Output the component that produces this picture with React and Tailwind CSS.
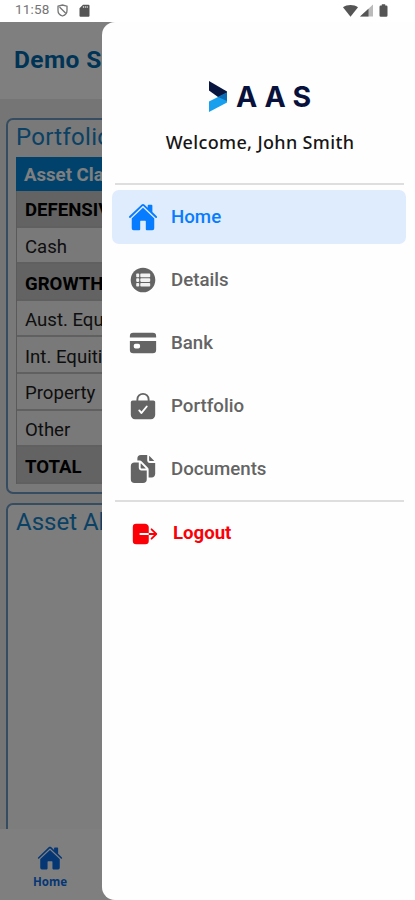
import React, { useState } from 'react'
import {
  IoHome,
  IoCard,
  IoBagCheck,
  IoDocuments,
  IoLogOut,
} from 'react-icons/io5'

function ListIcon({ size }) {
  return (
    <svg width={size} height={size} viewBox="0 0 30 30" fill="currentColor">
      <circle cx="15" cy="15" r="12.3" />
      <g fill="#f2f2f2">
        <rect x="8.2" y="8.6" width="3" height="3.6" rx="0.8" />
        <rect x="12.3" y="8.6" width="9.9" height="3.6" rx="0.8" />
        <rect x="8.2" y="13.3" width="3" height="3.6" rx="0.8" />
        <rect x="12.3" y="13.3" width="9.9" height="3.6" rx="0.8" />
        <rect x="8.2" y="18" width="3" height="3.6" rx="0.8" />
        <rect x="12.3" y="18" width="9.9" height="3.6" rx="0.8" />
      </g>
    </svg>
  )
}

const menuItems = [
  { id: 'home', label: 'Home', icon: IoHome },
  { id: 'details', label: 'Details', icon: ListIcon },
  { id: 'bank', label: 'Bank', icon: IoCard },
  { id: 'portfolio', label: 'Portfolio', icon: IoBagCheck },
  { id: 'documents', label: 'Documents', icon: IoDocuments },
]

const assetRows = [
  { name: 'DEFENSIVE', heading: true },
  { name: 'Cash' },
  { name: 'GROWTH', heading: true },
  { name: 'Aust. Equity' },
  { name: 'Int. Equities' },
  { name: 'Property' },
  { name: 'Other' },
  { name: 'TOTAL', heading: true },
]

function StatusBar() {
  return (
    <div className="flex h-[22px] shrink-0 items-center bg-white pr-[27px] pb-[2px] pl-[15px] text-[#757575]">
      <span className="w-[36px] text-[13.5px] leading-none tracking-[0.2px]">11:58</span>
      <svg className="ml-[5px] h-[13px] w-[13px]" viewBox="0 0 13 13" fill="none" stroke="currentColor" strokeWidth="1.3">
        <path d="M2 2.2 6.5 1 11 2.2V6.5C11 9.5 8.5 11.4 6.5 12 4.5 11.4 2 9.5 2 6.5ZM3.5 3 10 9.5" />
      </svg>
      <svg className="ml-[10px] h-[13px] w-[11px]" viewBox="0 0 11 13">
        <path d="M4 .8h5.5a1 1 0 0 1 1 1v10a1 1 0 0 1-1 1h-8a1 1 0 0 1-1-1V4.3Z" fill="#555" />
        <path d="M4.4 2v2M6.3 2v2M8.2 2v2" stroke="#ccc" />
      </svg>
      <div className="ml-auto flex items-center">
        <svg className="h-[13px] w-[15px]" viewBox="0 0 15 13" fill="#555">
          <path d="M0 3.3C4 .1 11 .1 15 3.3L7.5 12.8Z" />
        </svg>
        <svg className="ml-[2px] h-[13px] w-[13px]" viewBox="0 0 13 13">
          <path d="M0 12.5 13 .5v12Z" fill="#bbb" />
          <path d="M0 12.5 8.5 4.7v7.8Z" fill="#555" />
        </svg>
        <svg className="ml-[6px] h-[13px] w-[9px]" viewBox="0 0 9 13" fill="#555">
          <path d="M2.8.3h3.4v1.2h1a1.3 1.3 0 0 1 1.3 1.3v8.7a1.3 1.3 0 0 1-1.3 1.3H1.8A1.3 1.3 0 0 1 .5 11.5V2.8a1.3 1.3 0 0 1 1.3-1.3h1Z" />
        </svg>
      </div>
    </div>
  )
}

function Dashboard() {
  return (
    <div className="flex h-full flex-col bg-[#ebebeb]">
      <header className="flex h-[77px] shrink-0 items-center bg-white pl-[14px]">
        <h1 className="text-[24.5px] font-bold tracking-[0.4px] whitespace-nowrap text-[#0069ad]">Demo Super Fund</h1>
      </header>

      <main className="flex min-h-0 flex-1 flex-col gap-[9px] overflow-hidden px-[6px] pt-[19px]">
        {/* Portfolio table */}
        <section className="h-[376px] shrink-0 rounded-[7px] border-2 border-[#6c98c2] bg-[#f2f2f2] px-2">
          <h2 className="h-[37px] pt-[1px] text-[24px] leading-[32px] tracking-[0.3px] text-[#1583c8]">Portfolio</h2>
          <div className="flex h-[34px] items-center bg-[#0085d8] pt-[3px] pl-2 text-[18.6px] font-bold text-white">
            Asset Class
          </div>
          <div className="border-l border-[#b5b5b5]">
            {assetRows.map((row) => (
              <div
                key={row.name}
                className={`flex h-[36.6px] items-center border-b-2 border-[#c0c0c0] pt-[6px] pl-2 text-[18.6px] text-[#1c1c1c] ${
                  row.heading ? 'bg-[#c6c6c6] font-bold text-black' : 'bg-[#f2f2f2]'
                }`}
              >
                {row.name}
              </div>
            ))}
          </div>
        </section>

        {/* Allocation chart card */}
        <section className="h-[400px] shrink-0 rounded-[7px] border-2 border-[#6c98c2] bg-[#fafafa] px-2">
          <h2 className="pt-[1px] text-[24px] leading-[32px] text-[#1583c8]">Asset Allocation</h2>
        </section>
      </main>

      <nav className="flex h-[71px] shrink-0 bg-white">
        <div className="flex w-[100px] flex-col items-center pt-[16px] text-[#0a6eea]">
          <IoHome size={26} />
          <span className="mt-[3px] font-['Noto_Sans',sans-serif] text-[11.5px] leading-[16px] font-bold">Home</span>
        </div>
      </nav>
    </div>
  )
}

function Logo() {
  return (
    <div className="flex items-center justify-center">
      <svg className="h-[31px] w-[18px]" viewBox="0 0 18 31">
        <path d="M0 0 18 10.5V20L9 16 0 9.5Z" fill="#07153f" />
        <path d="M0 20.5 18 11.5V21.5L0 31Z" fill="#18a0ef" />
        <path d="M9 16 18 11.5V20Z" fill="#086bb3" />
      </svg>
      <span className="-mr-[7px] ml-[9px] font-['Inter',sans-serif] text-[28.5px] leading-[31px] font-bold tracking-[7px] text-[#07113c]">
        AAS
      </span>
    </div>
  )
}

function Drawer() {
  const [active, setActive] = useState('home')

  return (
    <aside className="absolute inset-y-0 right-0 left-[102px] flex flex-col rounded-l-[13px] bg-[#fefefe]">
      <div className="flex h-[161px] flex-col pt-[59px] pl-[3px]">
        <Logo />
        <p className="mt-[18px] text-center font-['Noto_Sans',sans-serif] text-[18px] leading-[24px] font-medium tracking-[0.35px] text-[#161616]">
          Welcome, John Smith
        </p>
      </div>
      <hr className="mr-[11px] ml-[13px] border-t-2 border-[#dedede]" />

      <ul className="mt-[5px] mr-[9px] ml-[10px] flex flex-col gap-[9px]">
        {menuItems.map(({ id, label, icon: Icon }) => (
          <li key={id}>
            <button
              onClick={() => setActive(id)}
              className={`flex h-[54px] w-full items-center rounded-[7px] pl-[16px] text-[18.7px] font-medium ${
                active === id ? 'bg-[#dfecfd] text-[#087cff]' : 'text-[#646464]'
              }`}
            >
              <Icon size={30} />
              <span className="ml-[13px]">{label}</span>
            </button>
          </li>
        ))}
      </ul>

      <hr className="mt-[4px] mr-[11px] ml-[13px] border-t-2 border-[#dedede]" />
      <button className="mt-[5px] ml-[28px] flex h-[54px] items-center text-[18.6px] font-bold text-[#fb0007]">
        <IoLogOut size={30} />
        <span className="ml-[13px]">Logout</span>
      </button>
    </aside>
  )
}

export default function App() {
  return (
    <div className="flex h-[900px] w-[415px] flex-col overflow-hidden bg-white font-['Roboto',sans-serif]">
      <StatusBar />
      <div className="relative min-h-0 flex-1">
        <Dashboard />
        <div className="absolute inset-0 bg-black/50" />
        <Drawer />
      </div>
    </div>
  )
}
